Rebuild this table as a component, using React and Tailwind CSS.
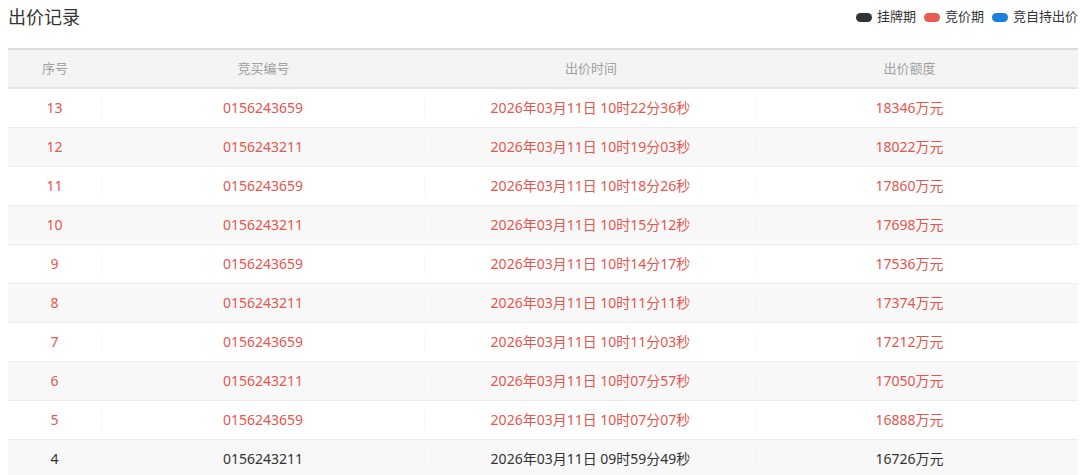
import React from 'react';

const rows = [
  { no: 13, id: '0156243659', time: '2026年03月11日 10时22分36秒', amount: '18346万元', red: true },
  { no: 12, id: '0156243211', time: '2026年03月11日 10时19分03秒', amount: '18022万元', red: true },
  { no: 11, id: '0156243659', time: '2026年03月11日 10时18分26秒', amount: '17860万元', red: true },
  { no: 10, id: '0156243211', time: '2026年03月11日 10时15分12秒', amount: '17698万元', red: true },
  { no: 9, id: '0156243659', time: '2026年03月11日 10时14分17秒', amount: '17536万元', red: true },
  { no: 8, id: '0156243211', time: '2026年03月11日 10时11分11秒', amount: '17374万元', red: true },
  { no: 7, id: '0156243659', time: '2026年03月11日 10时11分03秒', amount: '17212万元', red: true },
  { no: 6, id: '0156243211', time: '2026年03月11日 10时07分57秒', amount: '17050万元', red: true },
  { no: 5, id: '0156243659', time: '2026年03月11日 10时07分07秒', amount: '16888万元', red: true },
  { no: 4, id: '0156243211', time: '2026年03月11日 09时59分49秒', amount: '16726万元', red: false }
];

const legend = [
  { label: '挂牌期', color: 'bg-[#333333]' },
  { label: '竞价期', color: 'bg-[#ea5a4f]' },
  { label: '竞自持出价', color: 'bg-[#1b7fe0]' }
];

const cols = 'grid grid-cols-[94px_323px_332px_1fr]';

function App() {
  return (
    <div className="w-[1080px] h-[475px] overflow-hidden bg-white pl-2 pr-[2px] font-['Noto_Sans','Noto_Sans_CJK_SC',sans-serif]">
      <div className="flex items-center justify-between h-[38px] pb-[4px]">
        <h2 className="text-[18px] text-[#333] leading-none">出价记录</h2>
        <div className="flex items-center gap-[8px] text-[13px] text-[#333]">
          {legend.map(l => (
            <div key={l.label} className="flex items-center gap-[5px]">
              <span className={`w-[16px] h-[9px] rounded-full ${l.color}`} />
              <span>{l.label}</span>
            </div>
          ))}
        </div>
      </div>
      <div className="mt-[10px] border-t-2 border-[#dcdcdc]">
        <div className={`${cols} h-[39px] items-center bg-[#f4f4f4] border-b-2 border-[#e6e6e6] text-[13px] text-[#a0a0a0] text-center`}>
          <div>序号</div>
          <div>竞买编号</div>
          <div>出价时间</div>
          <div className="pr-[16px]">出价额度</div>
        </div>
        {rows.map((r, i) => (
          <div
            key={r.no}
            className={`${cols} h-[39px] items-center text-center text-[14px] border-b border-[#ececec] ${i % 2 ? 'bg-[#f8f8f8]' : 'bg-white'} ${r.red ? 'text-[#e4564d]' : 'text-[#333]'}`}
          >
            <div className="border-r border-[#f6f6f6] h-[20px] leading-[20px]">{r.no}</div>
            <div className="border-r border-[#f6f6f6] h-[20px] leading-[20px]">{r.id}</div>
            <div className="border-r border-[#f6f6f6] h-[20px] leading-[20px]">{r.time}</div>
            <div className="pr-[16px] leading-[20px]">{r.amount}</div>
          </div>
        ))}
      </div>
    </div>
  );
}

export default App;
